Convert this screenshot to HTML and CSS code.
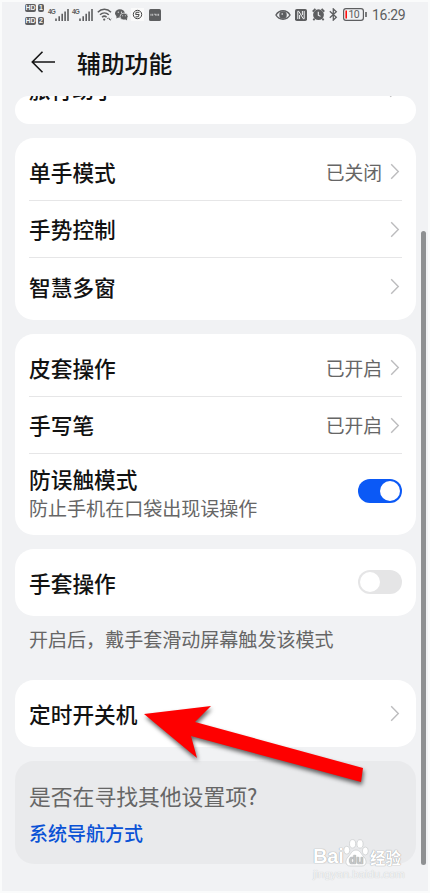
FILE: index.html
```html
<!DOCTYPE html>
<html lang="zh-CN">
<head>
<meta charset="utf-8">
<title>辅助功能</title>
<link rel="stylesheet" href="styles.css">
</head>
<body>
<svg width="0" height="0" class="defs"><defs>
<symbol id="chev" viewBox="0 0 10 17"><path d="M1.2 1.2 8.3 8.5 1.2 15.8" fill="none" stroke="#bcbcbe" stroke-width="1.4"/></symbol>
<symbol id="signal" viewBox="0 0 14 13"><path d="M1 13v-2.4M4.2 13V8.2M7.2 13V5.8M10.1 13V3.4M13 13V1" stroke="#5d5e60" stroke-width="1.6" fill="none"/></symbol>
</defs></svg>
<div class="screen">
  <header class="status">
    <div class="hd"><div><b>HD</b><i>1</i></div><div><b>HD</b><i>2</i></div></div>
    <div class="net"><small>4G</small><svg width="14" height="13"><use href="#signal"/></svg></div>
    <div class="net second"><small>4G</small><svg width="14" height="13"><use href="#signal"/></svg></div>
    <svg class="wifi" width="15" height="13" viewBox="0 0 15 13" fill="none" stroke="#5d5e60" stroke-width="1.5"><path d="M.8 4.2C4.5.4 10.3.4 14 4.2M3 6.8C5.6 4.3 9.2 4.3 11.8 6.8M5 9.2c1.5-1.4 3.2-1.4 4.6 0"/><circle cx="7.2" cy="11.6" r="1.1" fill="#5d5e60" stroke="none"/><path d="m10.3 11 1.2-1.2 1.2 1.2M12 11l1.1 1.2 1.2-1.2" stroke-width="1"/></svg>
    <svg class="wechat" width="13" height="12" viewBox="0 0 13 12" fill="#5d5e60"><ellipse cx="4.9" cy="4.3" rx="4.9" ry="4.1"/><path d="M1.8 6.8 1.3 9.6 4.5 8Z"/><ellipse cx="9" cy="7.6" rx="4" ry="3.5" stroke="#f1f2f4" stroke-width=".7"/><path d="m10 10 2.1 1.5-.3-2.5Z"/><g fill="#f1f2f4"><circle cx="3.3" cy="3.2" r=".6"/><circle cx="6.5" cy="3.2" r=".6"/><circle cx="7.7" cy="6.8" r=".5"/><circle cx="10.3" cy="6.8" r=".5"/></g></svg>
    <svg class="round" width="13" height="13" viewBox="0 0 13 13" fill="none"><path fill="#fafafa" d="M0 0h13v13H0z"/><circle cx="6.5" cy="6.5" r="4.2" stroke="#444" stroke-width="1"/><path d="M8.3 4.3H5.1l-.4 2.3 3.4-.2-.7 2.3-2.9.2" stroke="#444" stroke-width="1"/></svg>
    <svg class="app" width="12" height="12" viewBox="0 0 12 12"><rect width="12" height="12" rx="1.5" fill="#5d5e60"/><path d="M2 4.8v2M3.7 4.8v2M5.2 5.2h1.4v1.4M8 4.8v2M9.6 4.8v2" fill="none" stroke="#d5d5d6" stroke-width=".9"/></svg>
    <div class="grow"></div>
    <svg class="eye" width="16" height="12" viewBox="0 0 16 12" fill="none" stroke="#5d5e60" stroke-width="1.5"><path d="M1 6C4.2.4 11.8.4 15 6 11.8 11.6 4.2 11.6 1 6Z"/><circle cx="8" cy="6" r="3" fill="#5d5e60"/><circle cx="7.2" cy="5" r=".8" fill="#f1f2f4" stroke="none"/></svg>
    <svg class="nfc" width="12" height="12" viewBox="0 0 12 12"><rect width="12" height="12" rx="1.8" fill="#5d5e60"/><path d="M2.8 10V2.3h1L8.2 9.7h1V2M4.6 10V6M7.4 2v4" fill="none" stroke="#f1f2f4" stroke-width="1"/></svg>
    <svg class="alarm" width="13" height="13" viewBox="0 0 13 13"><circle cx="6.5" cy="6.7" r="5.4" fill="#5d5e60"/><path d="M.7 3.6 3.4.9M9.6.9l2.7 2.7M2.6 10.5l-1.2 1.8M10.4 10.5l1.2 1.8" stroke="#5d5e60" stroke-width="1.8"/><path d="M6.3 3.8v3.3l2.2 1.3" stroke="#f1f2f4" stroke-width="1.1" fill="none"/></svg>
    <svg class="bt" width="9" height="13" viewBox="0 0 9 13" fill="none" stroke="#5d5e60" stroke-width="1.3"><path d="m.8 3.3 6.5 6-3 2.8V.9l3 2.8-6.5 6"/></svg>
    <svg class="battery" width="24" height="13" viewBox="0 0 24 13"><rect x=".6" y=".6" width="19.8" height="11.8" rx="2.4" fill="none" stroke="#5d5e60" stroke-width="1.2"/><path d="M3.2 2.6v7.8" stroke="#f00" stroke-width="1.5"/><path d="M23 4v5" stroke="#5d5e60" stroke-width="1.6"/><text x="5.4" y="10.2" font-size="10.5" fill="#5d5e60" font-family="Roboto, sans-serif" textLength="11.3">10</text></svg>
    <time>16:29</time>
  </header>
  <div class="title">
    <svg width="25" height="22" viewBox="0 0 25 22" fill="none" stroke="#151515" stroke-width="1.6"><path d="M24 11H1.5M11.5.8 1.3 11l10.2 10.2"/></svg>
    <h1>辅助功能</h1>
  </div>
  <main>
    <section class="clipped"><div>旅行助手</div><svg width="10" height="17"><use href="#chev"/></svg></section>
    <section class="card">
      <div class="row first"><span>单手模式</span><em>已关闭</em><svg width="10" height="17"><use href="#chev"/></svg></div>
      <div class="row"><span>手势控制</span><svg width="10" height="17"><use href="#chev"/></svg></div>
      <div class="row last"><span>智慧多窗</span><svg width="10" height="17"><use href="#chev"/></svg></div>
    </section>
    <section class="card cover">
      <div class="row first"><span>皮套操作</span><em>已开启</em><svg width="10" height="17"><use href="#chev"/></svg></div>
      <div class="row"><span>手写笔</span><em>已开启</em><svg width="10" height="17"><use href="#chev"/></svg></div>
      <div class="row tall"><div class="stack"><span>防误触模式</span><p>防止手机在口袋出现误操作</p></div><div class="switch on"></div></div>
    </section>
    <section class="card single glove"><div class="row"><span>手套操作</span><div class="switch"></div></div></section>
    <p class="note">开启后，戴手套滑动屏幕触发该模式</p>
    <section class="card single power"><div class="row"><span>定时开关机</span><svg width="10" height="17"><use href="#chev"/></svg></div></section>
    <section class="hint"><p>是否在寻找其他设置项?</p><a>系统导航方式</a></section>
  </main>
  <div class="scrollbar"></div>
  <svg class="arrow" width="240" height="95" viewBox="0 0 240 95"><path fill="#fe0000" d="M8 15 75 7 59 23 227 69 225 83 55 37 61 59Z"/></svg>
  <div class="watermark">
    <div class="brand"><span>Bai</span><svg width="26" height="28" viewBox="0 0 26 28"><g fill="#fff" stroke="#cdcfd1" stroke-width=".8"><ellipse cx="3.8" cy="11.2" rx="3" ry="4"/><ellipse cx="9.6" cy="4.8" rx="3.1" ry="4.2"/><ellipse cx="17" cy="4.9" rx="3.1" ry="4.2"/><ellipse cx="22.3" cy="12" rx="3" ry="4"/><path d="M13 11c4 0 5 4 8 7s3 9-2 9H7c-5 0-5-6-2-9s4-7 8-7Z"/></g><text x="6" y="24.5" font-size="12" font-weight="700" fill="#c5c7c9" font-family="Liberation Sans, sans-serif">du</text></svg><strong>经验</strong></div>
    <div class="site">jingyan.baidu.com</div>
  </div>
</div>
</body>
</html>
```

FILE: styles.css
```css
* { box-sizing: border-box; }
body { margin: 0; background: #fafbfb; font-family: "Noto Sans CJK SC", sans-serif; color: #121212; }
.defs { position: absolute; }
svg { display: block; flex: none; }
h1, p { margin: 0; font-weight: 400; }
.screen { position: relative; width: 430px; height: 893px; padding: 0 12px 0 13px; overflow: hidden; background: #f1f2f4; border: 2px solid #fafbfb; }
.status { display: flex; align-items: center; height: 26px; padding: 0 11px 0 10px; color: #5d5e60; }
.status > * { margin-top: -1px; }
.hd { display: flex; flex-direction: column; gap: 5px; width: 19px; }
.hd div { display: flex; gap: 2px; }
.hd b, .hd i { display: block; height: 8px; border-radius: 2px; background: #5d5e60; color: #f1f2f4; font: 700 7px/8px "Liberation Sans", sans-serif; text-align: center; }
.hd b { width: 11px; }
.hd i { width: 6px; }
.net { display: flex; width: 21px; margin-left: 4px; }
.net small { width: 7px; font: 700 6.5px/8px "Liberation Sans", sans-serif; letter-spacing: -.8px; }
.second { margin-left: 3px; }
.wifi { margin-left: 4px; }
.wechat { margin-left: 3px; }
.round { margin-left: 3px; }
.app { margin-left: 5px; }
.grow { flex: 1; }
.nfc { margin-left: 4px; }
.alarm { margin-left: 5px; }
.bt { margin-left: 4px; }
.battery { margin-left: 5px; }
time { width: 33px; margin-left: 5px; font: 14px/20px Roboto, sans-serif; letter-spacing: -.3px; white-space: nowrap; }
.title { display: flex; align-items: center; height: 68px; padding: 0 0 0 16px; }
.title h1 { margin: 1px 0 0 21px; font-size: 23.8px; line-height: 36px; font-weight: 500; }
.clipped { display: flex; justify-content: space-between; height: 28px; padding: 0 14px; overflow: hidden; border-radius: 14px; background: #fff; font-size: 21.7px; font-weight: 500; line-height: 32px; }
.clipped div { margin-top: -23px; }
.clipped svg { margin: -15px 3px 0 0; }
.card { margin-top: 14px; padding: 0 14px; border-radius: 19px; background: #fff; }
.row { display: flex; align-items: center; height: 57px; border-bottom: 1px solid #e6e6e7; font-size: 21.7px; font-weight: 500; line-height: 32px; }
.row span { flex: 1; }
.row.first { height: 63px; padding-top: 5px; }
.row.last { height: 62px; padding-bottom: 5px; border: 0; }
.row em { margin-right: 8px; color: #666; font-size: 18.8px; font-style: normal; font-weight: 400; }
.row svg { margin-right: 2px; }
.row.tall { height: 81px; border: 0; }
.stack { flex: 1; margin-top: -5px; }
.stack span { display: block; line-height: 31px; }
.stack p { color: #666; font-size: 19.05px; font-weight: 400; line-height: 28px; }
.switch { width: 44px; height: 24px; padding: 2px; border-radius: 12px; background: #e5e5e6; }
.switch::before { content: ""; display: block; width: 20px; height: 20px; border-radius: 50%; background: #fff; }
.switch.on { margin-top: -7px; background: #0b59f6; }
.switch.on::before { margin-left: 20px; }
.glove .switch { margin-top: -1px; }
.single .row { height: 67px; border: 0; }
.note { padding: 9px 14px 0; color: #666; font-size: 19.05px; line-height: 28px; }
.power { margin-top: 27px; }
.hint { height: 103px; margin-top: 14px; padding: 19px 14px; border-radius: 19px; background: #e9eaec; }
.hint p { color: #666; font-size: 21.8px; line-height: 32px; }
.hint a { display: block; margin-top: 7px; color: #0a52d6; font-size: 19px; font-weight: 500; line-height: 28px; }
.scrollbar { position: absolute; left: 419px; top: 229px; width: 5px; height: 634px; border-radius: 3px; background: #8e9092; }
.arrow { position: absolute; left: 134px; top: 697px; filter: drop-shadow(1px 3px 2px rgba(0, 0, 0, .6)); }
.watermark { position: absolute; left: 311px; top: 837px; width: 93px; color: #fff; text-shadow: 0 0 1px #999b9d, 0 0 1px #b3b5b7; }
.brand { display: flex; align-items: flex-end; height: 28px; }
.brand span { width: 30px; font: 700 20px/21px "Liberation Sans", sans-serif; letter-spacing: -.2px; }
.brand svg { margin-right: 1px; }
.brand strong { font-size: 15.5px; line-height: 20px; font-weight: 700; }
.site { margin-top: 1px; font: 11.4px/13px "Liberation Sans", sans-serif; color: #f4f5f6; text-shadow: 0 0 1px #b9bbbd; }
```
